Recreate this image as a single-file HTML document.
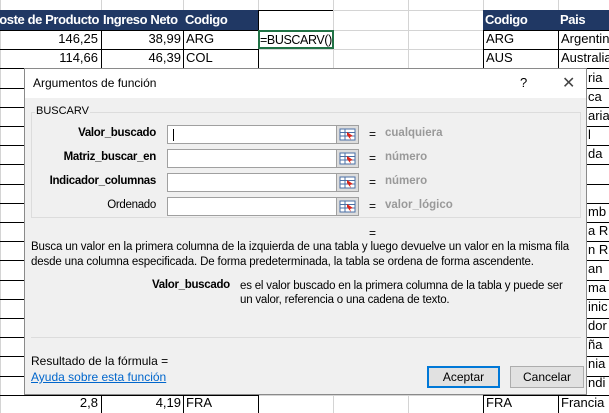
<!DOCTYPE html><html><head><meta charset="utf-8"><style>
body{margin:0;width:609px;height:413px;overflow:hidden;background:#fff;font-family:"Liberation Sans",sans-serif;position:relative}
.c{position:absolute;box-sizing:border-box;font-size:13px;line-height:18px;white-space:nowrap;overflow:hidden;padding:0 2px}
.h{background:#203864;color:#fff;font-weight:bold;font-size:13px;letter-spacing:-0.4px;line-height:20px}
.dlg{position:absolute;left:24px;top:68px;width:563px;height:327px;background:#f0f0f0;border:1px solid #8a8a8a;box-sizing:border-box;font-size:12px;color:#000}
.t{position:absolute;white-space:nowrap}
.inp{position:absolute;left:142px;width:170px;height:19px;background:#fff;border:1px solid #a0a0a0;box-sizing:border-box}
.btn{position:absolute;left:311px;width:23px;height:19px;background:#ddd;border:1px solid #a0a0a0;box-sizing:border-box}
.lbl{position:absolute;right:430px;font-weight:bold;font-size:11.5px;letter-spacing:-0.3px}
.eq{position:absolute;left:344px}
.hint{position:absolute;left:360px;color:#999;font-weight:bold;font-size:11.5px}
</style></head><body>
<div id="g"></div>
<script>
var g=document.getElementById('g'),h='';
var cols=[0,101,183,258,333,408,483,558,609];
var rows=[10,30];for(var i=0;i<19;i++)rows.push(Math.round(30+(i+1)*19.2));
for(var r=0;r<rows.length;r++){h+='<div style="position:absolute;left:0;top:'+rows[r]+'px;width:609px;height:1px;background:#d4d4d4"></div>';}
for(var c=0;c<cols.length;c++){h+='<div style="position:absolute;top:0;left:'+cols[c]+'px;width:1px;height:413px;background:#d4d4d4"></div>';}
for(var r=1;r<rows.length;r++){h+='<div style="position:absolute;left:0;top:'+rows[r]+'px;width:258px;height:1px;background:#000"></div><div style="position:absolute;left:483px;top:'+rows[r]+'px;width:126px;height:1px;background:#000"></div>';}
[101,183,258,483,558].forEach(function(x){h+='<div style="position:absolute;top:10px;left:'+x+'px;width:1px;height:403px;background:#000"></div>';});
g.innerHTML=h;
</script>
<div class="c h" style="left:0;top:10px;width:101px;height:20px;display:flex;justify-content:flex-end">Coste de Producto</div>
<div class="c h" style="left:101px;top:10px;width:82px;height:20px">Ingreso Neto</div>
<div class="c h" style="left:183px;top:10px;width:75px;height:20px">Codigo</div>
<div class="c h" style="left:483px;top:10px;width:75px;height:20px">Codigo</div>
<div class="c h" style="left:558px;top:10px;width:51px;height:20px">Pais</div>
<div style="position:absolute;left:258px;top:10px;width:75px;height:1px;background:#000"></div>
<div class="c" style="left:0;top:30px;width:100px;text-align:right">146,25</div>
<div class="c" style="left:101px;top:30px;width:82px;text-align:right">38,99</div>
<div class="c" style="left:184px;top:30px">ARG</div>
<div class="c" style="left:0;top:49px;width:100px;text-align:right">114,66</div>
<div class="c" style="left:101px;top:49px;width:82px;text-align:right">46,39</div>
<div class="c" style="left:184px;top:49px">COL</div>
<div style="position:absolute;left:258px;top:30px;width:76px;height:19px;border:2px solid #217346;box-sizing:border-box;background:#fff"></div>
<div class="c" style="left:258px;top:31px;font-size:12.5px;letter-spacing:-0.4px">=BUSCARV()</div>
<div class="c" style="left:484px;top:30px">ARG</div><div class="c" style="left:559px;top:30px">Argentina</div>
<div class="c" style="left:484px;top:49px">AUS</div><div class="c" style="left:559px;top:49px">Australia</div>
<div class="c" style="left:0;top:394px;width:100px;text-align:right">2,8</div>
<div class="c" style="left:101px;top:394px;width:82px;text-align:right">4,19</div>
<div class="c" style="left:184px;top:394px">FRA</div>
<div class="c" style="left:484px;top:394px">FRA</div><div class="c" style="left:559px;top:394px">Francia</div>
<div class="c" style="left:586px;top:69px">ria</div><div class="c" style="left:586px;top:88px">ca</div><div class="c" style="left:586px;top:107px">aria</div><div class="c" style="left:586px;top:126px">l</div><div class="c" style="left:586px;top:145px">da</div><div class="c" style="left:586px;top:203px">mb</div><div class="c" style="left:586px;top:222px">a Ri</div><div class="c" style="left:586px;top:241px">n R</div><div class="c" style="left:586px;top:260px">an</div><div class="c" style="left:586px;top:279px">ma</div><div class="c" style="left:586px;top:298px">inic</div><div class="c" style="left:586px;top:317px">dor</div><div class="c" style="left:586px;top:336px">ña</div><div class="c" style="left:586px;top:355px">nia</div><div class="c" style="left:586px;top:374px">ndi</div>
<div class="dlg">
<div style="position:absolute;left:0;top:0;width:561px;height:29px;background:#fff"></div>
<div class="t" style="left:8px;top:7px;font-size:12px">Argumentos de función</div>
<div class="t" style="left:495px;top:6px;font-size:13px">?</div>
<div class="t" style="left:537px;top:4px;font-size:16px;color:#444">✕</div>
<div style="position:absolute;left:6px;top:43px;width:550px;height:106px;border:1px solid #dcdcdc;box-sizing:border-box"></div>
<div class="t" style="left:10px;top:36px;background:#f0f0f0;padding:0 1px;font-size:11px">BUSCARV</div>
<div class="lbl" style="top:58px">Valor_buscado</div><div class="inp" style="top:56px"><div style="position:absolute;left:5px;top:3px;width:1px;height:12px;background:#000"></div></div><div class="btn" style="top:56px"></div><div class="eq" style="top:58px">=</div><div class="hint" style="top:58px">cualquiera</div>
<div class="lbl" style="top:82px">Matriz_buscar_en</div><div class="inp" style="top:80px"></div><div class="btn" style="top:80px"></div><div class="eq" style="top:82px">=</div><div class="hint" style="top:82px">número</div>
<div class="lbl" style="top:106px">Indicador_columnas</div><div class="inp" style="top:104px"></div><div class="btn" style="top:104px"></div><div class="eq" style="top:106px">=</div><div class="hint" style="top:106px">número</div>
<div class="lbl" style="top:130px;font-weight:normal">Ordenado</div><div class="inp" style="top:128px"></div><div class="btn" style="top:128px"></div><div class="eq" style="top:130px">=</div><div class="hint" style="top:130px">valor_lógico</div>
<div class="eq" style="top:157px">=</div>
<div class="t" style="left:6px;top:171px;font-size:11.5px;line-height:15px;letter-spacing:-0.15px">Busca un valor en la primera columna de la izquierda de una tabla y luego devuelve un valor en la misma fila<br>desde una columna especificada. De forma predeterminada, la tabla se ordena de forma ascendente.</div>
<div class="t" style="left:127px;top:210px;font-weight:bold;font-size:11.5px;letter-spacing:-0.3px">Valor_buscado</div>
<div class="t" style="left:215px;top:210px;font-size:11.5px;line-height:14px;letter-spacing:-0.2px">es el valor buscado en la primera columna de la tabla y puede ser<br>un valor, referencia o una cadena de texto.</div>
<div style="position:absolute;left:6px;top:268px;width:550px;height:1px;background:#dcdcdc"></div>
<div class="t" style="left:6px;top:285px">Resultado de la fórmula =</div>
<div class="t" style="left:6px;top:301px;color:#0066cc;text-decoration:underline">Ayuda sobre esta función</div>
<div style="position:absolute;left:402px;top:297px;width:73px;height:22px;background:#e1e1e1;border:2px solid #0078d7;box-sizing:border-box;text-align:center;line-height:18px">Aceptar</div>
<div style="position:absolute;left:485px;top:297px;width:74px;height:22px;background:#e1e1e1;border:1px solid #adadad;box-sizing:border-box;text-align:center;line-height:20px">Cancelar</div>
</div>
<script>
document.querySelectorAll('.btn').forEach(function(b){b.innerHTML='<svg width="21" height="17" style="position:absolute;left:0;top:0"><rect x="3" y="3" width="15" height="11" fill="#fff" stroke="#4a6fa5"/><line x1="3" y1="6.5" x2="18" y2="6.5" stroke="#4a6fa5"/><line x1="3" y1="10" x2="18" y2="10" stroke="#4a6fa5"/><line x1="8" y1="3" x2="8" y2="14" stroke="#4a6fa5"/><path d="M10 6 L16 10 L13 11 L14 14 L10 9Z" fill="#d9251c"/></svg>';});
</script>
</body></html>
